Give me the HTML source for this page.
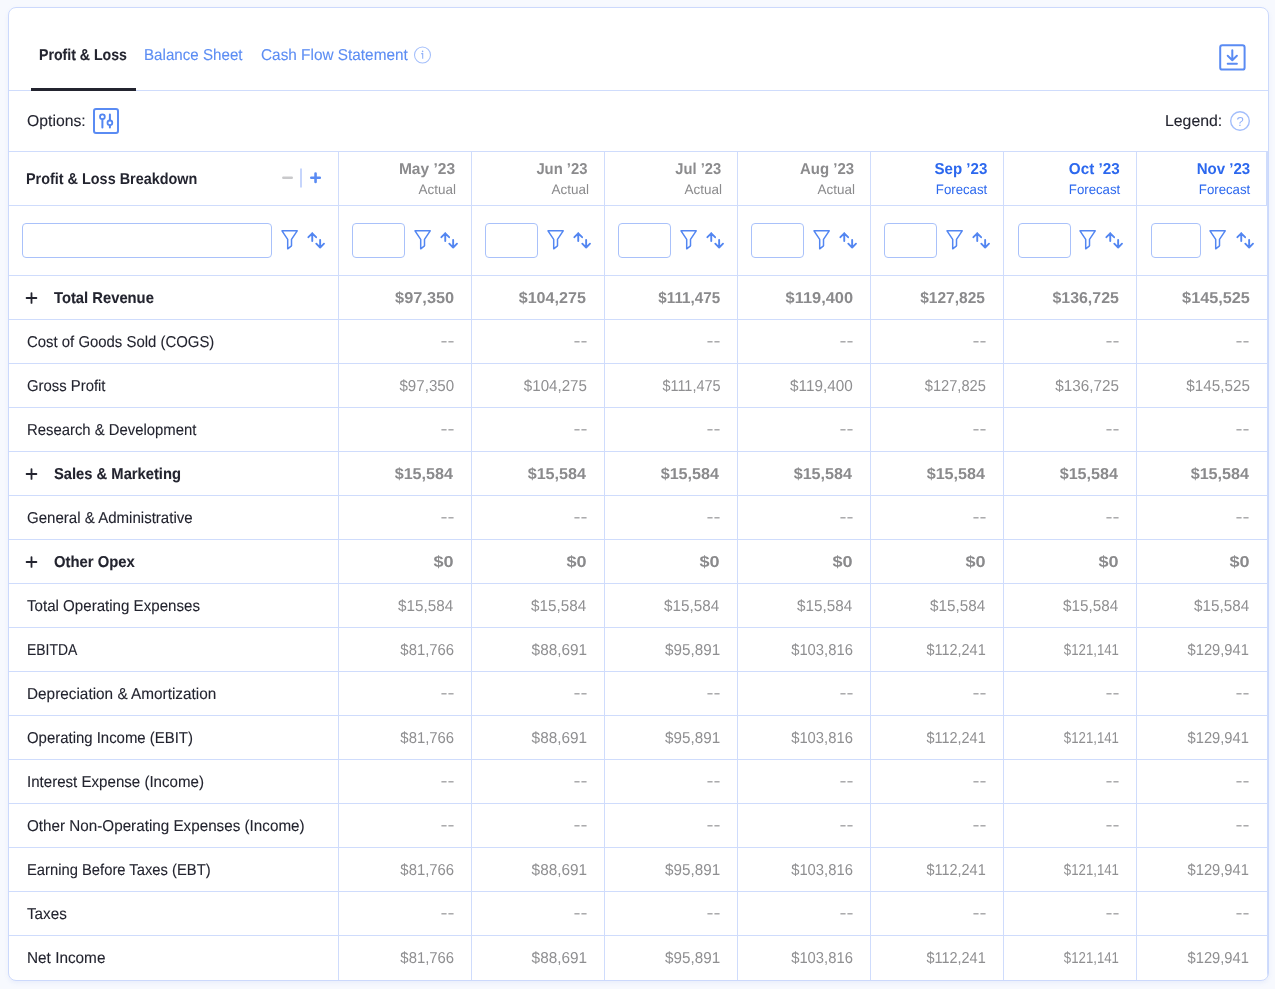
<!DOCTYPE html>
<html lang="en"><head><meta charset="utf-8"><title>Profit &amp; Loss</title><style>
*{box-sizing:border-box;margin:0;padding:0}
html,body{width:1275px;height:989px;overflow:hidden}
body{background:#f7f9fe;font-family:"Liberation Sans",sans-serif;font-size:15.8px;color:#23242f;position:relative;text-rendering:geometricPrecision}
.t{position:relative;display:inline-block;white-space:nowrap;transform-origin:0 50%}
.t.ra{transform-origin:100% 50%}
.card{position:absolute;left:8px;top:7px;width:1261px;height:974px;background:#fff;border:1px solid #ccd9fc;border-radius:8px;overflow:hidden;box-shadow:0 2px 4px rgba(120,150,230,.1);will-change:transform}
.tabs{position:absolute;left:0;top:0;width:1259px;height:83px;border-bottom:1px solid #cfdcfc}
.tab{position:absolute;top:39px;line-height:18px;white-space:nowrap;color:#5c8df3}
.tab.on{color:#23242f;font-weight:700}
.ul{position:absolute;left:22px;top:80px;width:105px;height:3px;background:#23242f}
.abs{position:absolute}
.opts{position:absolute;left:0;top:83px;width:1259px;height:60px}
.opts .o{position:absolute;top:21.8px;line-height:18px;white-space:nowrap}
.grid{position:absolute;left:0;top:143px;width:1259px;border-top:1px solid #cfdcfc;border-right:1px solid #cfdcfc}
.r{display:flex;border-bottom:1px solid #cfdcfc;height:44px}
.r:last-child{border-bottom:none}
.c{flex:0 0 133px;border-left:1px solid #cfdcfc;position:relative;white-space:nowrap}
.c0{flex:0 0 329px;border-left:none;position:relative;white-space:nowrap}
.c.last{flex:0 0 131px}
.hr{height:54px}
.hr .c0 b{position:absolute;left:18px;top:19.1px;line-height:18px}
.hr .c{text-align:right;padding-right:16px;color:#8b8b8d}
.hr .c b{display:block;margin-top:9px;line-height:18px;font-size:15.8px}
.hr .c i{display:block;font-style:normal;font-size:13.7px;line-height:16px;margin-top:2.9px}
.hr .c.f{color:#2c68ee}
.hr .c.last{border-right:1px solid #cfdcfc;padding-right:15px}
.fr{height:70px}
.in{position:absolute;top:17px;height:35px;border:1px solid #a9c1fa;border-radius:4px;background:#fff}
.fi{position:absolute;top:21.9px}
.si{position:absolute;top:25px}
.d .c0{padding-left:18px;line-height:43px;-webkit-text-stroke:.1px}
.tab,.opts .o{-webkit-text-stroke:.1px}
.d .c{text-align:right;padding-right:17px;line-height:43px;color:#8f8f91}
.d .c.dd{color:#9a9a9c}
.d .c.dd .t{top:.3px}
.d.b .c0{font-weight:700;padding-left:45px}
.d.b .c{font-weight:700;color:#8a8a8c}
.d .t{top:.9px}
.pl{position:absolute;left:15.7px;top:15px}
</style></head><body>
<div class="card">
<div class="tabs">
<span class="tab on" style="left:31px"><span class="t" style="transform:scaleX(0.895);left:-0.64px;">Profit &amp; Loss</span></span>
<span class="tab" style="left:136px"><span class="t" style="transform:scaleX(0.959);left:-0.65px;">Balance Sheet</span></span>
<span class="tab" style="left:252px"><span class="t" style="transform:scaleX(0.972);left:-0.22px;">Cash Flow Statement</span></span>
<svg class="abs" style="left:404px;top:37px" width="20" height="20" viewBox="0 0 20 20"><circle cx="9.5" cy="10" r="8" fill="none" stroke="#a6c0fb" stroke-width="1.1"/><path d="M8.2 8.6 H9.7 V13.8" fill="none" stroke="#8fb0f8" stroke-width="1.1"/><circle cx="9.6" cy="6.4" r=".8" fill="#8fb0f8"/></svg>
<svg class="abs" style="left:1209px;top:35px" width="30" height="30" viewBox="0 0 30 30"><rect x="2.2" y="2.2" width="24.4" height="24.4" rx="2.2" fill="none" stroke="#5a8bf3" stroke-width="2"/><path d="M14.3 7.3 V17 M9.7 12.8 L14.3 17.2 L18.9 12.8 M9.7 20.7 H18.9" fill="none" stroke="#5a8bf3" stroke-width="2" stroke-linecap="round" stroke-linejoin="round"/></svg>
<div class="ul"></div>
</div>
<div class="opts"><span class="o" style="left:18px"><span class="t" style="transform:scaleX(0.997);left:-0.36px;">Options:</span></span>
<svg class="abs" style="left:82px;top:15px" width="30" height="30" viewBox="0 0 30 30"><rect x="3" y="3" width="24" height="24" rx="2" fill="none" stroke="#5a8bf3" stroke-width="2"/><path d="M11.4 13.6 V21.6 M18.9 8.4 V14.4 M18.9 19.4 V21.6" fill="none" stroke="#5386f1" stroke-width="2" stroke-linecap="round"/><circle cx="11.4" cy="10.7" r="2.4" fill="none" stroke="#5386f1" stroke-width="1.8"/><circle cx="18.9" cy="16.8" r="2.4" fill="none" stroke="#5386f1" stroke-width="1.8"/></svg>
<span class="o" style="left:1157px"><span class="t" style="transform:scaleX(1.003);left:-0.70px;">Legend:</span></span>
<svg class="abs" style="left:1219px;top:17.5px" width="24" height="24" viewBox="0 0 24 24"><circle cx="12" cy="12" r="9.3" fill="none" stroke="#a3befb" stroke-width="1.4"/><text x="12" y="16.6" text-anchor="middle" font-family="Liberation Sans, sans-serif" font-size="13" fill="#93b2f9">?</text></svg>
</div>
<div class="grid">
<div class="r hr"><div class="c0"><b><span class="t" style="transform:scaleX(0.912);left:-0.97px;">Profit &amp; Loss Breakdown</span></b>
<svg class="abs" style="left:270px;top:13px" width="50" height="26" viewBox="0 0 50 26"><path d="M4.3 12.7 H12.8" stroke="#c9c9cb" stroke-width="2.4" fill="none" stroke-linecap="round"/><path d="M22 3.6 V22.5" stroke="#c6d5fc" stroke-width="2" fill="none"/><path d="M32.3 12.8 H40.8 M36.55 8.55 V17.05" stroke="#5a8bf3" stroke-width="2.6" fill="none" stroke-linecap="round"/></svg>
</div>
<div class="c"><b><span class="t ra" style="transform:scaleX(0.984);left:-0.33px;">May ’23</span></b><i><span class="t ra" style="transform:scaleX(0.984);left:0.67px;">Actual</span></i></div>
<div class="c"><b><span class="t ra" style="transform:scaleX(0.938);left:-0.18px;">Jun ’23</span></b><i><span class="t ra" style="transform:scaleX(0.984);left:0.67px;">Actual</span></i></div>
<div class="c"><b><span class="t ra" style="transform:scaleX(0.932);left:-0.19px;">Jul ’23</span></b><i><span class="t ra" style="transform:scaleX(0.984);left:0.67px;">Actual</span></i></div>
<div class="c"><b><span class="t ra" style="transform:scaleX(0.946);left:-0.11px;">Aug ’23</span></b><i><span class="t ra" style="transform:scaleX(0.984);left:0.67px;">Actual</span></i></div>
<div class="c f"><b><span class="t ra" style="transform:scaleX(0.954);left:-0.14px;">Sep ’23</span></b><i><span class="t ra" style="transform:scaleX(0.966);left:-0.16px;">Forecast</span></i></div>
<div class="c f"><b><span class="t ra" style="transform:scaleX(0.966);left:0.04px;">Oct ’23</span></b><i><span class="t ra" style="transform:scaleX(0.966);left:-0.16px;">Forecast</span></i></div>
<div class="c f last"><b><span class="t ra" style="transform:scaleX(0.952);left:-1.18px;">Nov ’23</span></b><i><span class="t ra" style="transform:scaleX(0.966);left:-0.48px;">Forecast</span></i></div>
</div>
<div class="r fr"><div class="c0"><div class="in" style="left:13px;width:250px"></div><svg class="fi" style="left:271px" width="20" height="22" viewBox="0 0 20 22"><path d="M2 2.8 H17.2 L11.5 11.4 V17.8 L7.7 20.8 V11.4 Z" fill="none" stroke="#5386f1" stroke-width="1.5" stroke-linejoin="round"/></svg><svg class="si" style="left:297.8px" width="20" height="20" viewBox="0 0 20 20"><path d="M5.25 10 V2.3 M1.4 6.2 L5.25 2.3 L9.1 6.2 M13.15 8.85 V16.55 M9.3 12.65 L13.15 16.55 L17 12.65" fill="none" stroke="#5386f1" stroke-width="1.9" stroke-linecap="round" stroke-linejoin="round"/></svg></div>
<div class="c"><div class="in" style="left:13px;width:53px"></div><svg class="fi" style="left:73.85px" width="20" height="22" viewBox="0 0 20 22"><path d="M2 2.8 H17.2 L11.5 11.4 V17.8 L7.7 20.8 V11.4 Z" fill="none" stroke="#5386f1" stroke-width="1.5" stroke-linejoin="round"/></svg><svg class="si" style="left:100.65px" width="20" height="20" viewBox="0 0 20 20"><path d="M5.25 10 V2.3 M1.4 6.2 L5.25 2.3 L9.1 6.2 M13.15 8.85 V16.55 M9.3 12.65 L13.15 16.55 L17 12.65" fill="none" stroke="#5386f1" stroke-width="1.9" stroke-linecap="round" stroke-linejoin="round"/></svg></div>
<div class="c"><div class="in" style="left:13px;width:53px"></div><svg class="fi" style="left:73.85px" width="20" height="22" viewBox="0 0 20 22"><path d="M2 2.8 H17.2 L11.5 11.4 V17.8 L7.7 20.8 V11.4 Z" fill="none" stroke="#5386f1" stroke-width="1.5" stroke-linejoin="round"/></svg><svg class="si" style="left:100.65px" width="20" height="20" viewBox="0 0 20 20"><path d="M5.25 10 V2.3 M1.4 6.2 L5.25 2.3 L9.1 6.2 M13.15 8.85 V16.55 M9.3 12.65 L13.15 16.55 L17 12.65" fill="none" stroke="#5386f1" stroke-width="1.9" stroke-linecap="round" stroke-linejoin="round"/></svg></div>
<div class="c"><div class="in" style="left:13px;width:53px"></div><svg class="fi" style="left:73.85px" width="20" height="22" viewBox="0 0 20 22"><path d="M2 2.8 H17.2 L11.5 11.4 V17.8 L7.7 20.8 V11.4 Z" fill="none" stroke="#5386f1" stroke-width="1.5" stroke-linejoin="round"/></svg><svg class="si" style="left:100.65px" width="20" height="20" viewBox="0 0 20 20"><path d="M5.25 10 V2.3 M1.4 6.2 L5.25 2.3 L9.1 6.2 M13.15 8.85 V16.55 M9.3 12.65 L13.15 16.55 L17 12.65" fill="none" stroke="#5386f1" stroke-width="1.9" stroke-linecap="round" stroke-linejoin="round"/></svg></div>
<div class="c"><div class="in" style="left:13px;width:53px"></div><svg class="fi" style="left:73.85px" width="20" height="22" viewBox="0 0 20 22"><path d="M2 2.8 H17.2 L11.5 11.4 V17.8 L7.7 20.8 V11.4 Z" fill="none" stroke="#5386f1" stroke-width="1.5" stroke-linejoin="round"/></svg><svg class="si" style="left:100.65px" width="20" height="20" viewBox="0 0 20 20"><path d="M5.25 10 V2.3 M1.4 6.2 L5.25 2.3 L9.1 6.2 M13.15 8.85 V16.55 M9.3 12.65 L13.15 16.55 L17 12.65" fill="none" stroke="#5386f1" stroke-width="1.9" stroke-linecap="round" stroke-linejoin="round"/></svg></div>
<div class="c"><div class="in" style="left:13px;width:53px"></div><svg class="fi" style="left:73.85px" width="20" height="22" viewBox="0 0 20 22"><path d="M2 2.8 H17.2 L11.5 11.4 V17.8 L7.7 20.8 V11.4 Z" fill="none" stroke="#5386f1" stroke-width="1.5" stroke-linejoin="round"/></svg><svg class="si" style="left:100.65px" width="20" height="20" viewBox="0 0 20 20"><path d="M5.25 10 V2.3 M1.4 6.2 L5.25 2.3 L9.1 6.2 M13.15 8.85 V16.55 M9.3 12.65 L13.15 16.55 L17 12.65" fill="none" stroke="#5386f1" stroke-width="1.9" stroke-linecap="round" stroke-linejoin="round"/></svg></div>
<div class="c"><div class="in" style="left:14px;width:53px"></div><svg class="fi" style="left:73.85px" width="20" height="22" viewBox="0 0 20 22"><path d="M2 2.8 H17.2 L11.5 11.4 V17.8 L7.7 20.8 V11.4 Z" fill="none" stroke="#5386f1" stroke-width="1.5" stroke-linejoin="round"/></svg><svg class="si" style="left:100.65px" width="20" height="20" viewBox="0 0 20 20"><path d="M5.25 10 V2.3 M1.4 6.2 L5.25 2.3 L9.1 6.2 M13.15 8.85 V16.55 M9.3 12.65 L13.15 16.55 L17 12.65" fill="none" stroke="#5386f1" stroke-width="1.9" stroke-linecap="round" stroke-linejoin="round"/></svg></div>
<div class="c last"><div class="in" style="left:14px;width:50px"></div><svg class="fi" style="left:70.85px" width="20" height="22" viewBox="0 0 20 22"><path d="M2 2.8 H17.2 L11.5 11.4 V17.8 L7.7 20.8 V11.4 Z" fill="none" stroke="#5386f1" stroke-width="1.5" stroke-linejoin="round"/></svg><svg class="si" style="left:98.75px" width="20" height="20" viewBox="0 0 20 20"><path d="M5.25 10 V2.3 M1.4 6.2 L5.25 2.3 L9.1 6.2 M13.15 8.85 V16.55 M9.3 12.65 L13.15 16.55 L17 12.65" fill="none" stroke="#5386f1" stroke-width="1.9" stroke-linecap="round" stroke-linejoin="round"/></svg></div>
</div>
<div class="r d b"><div class="c0"><svg class="pl" width="14" height="14" viewBox="0 0 14 14"><path d="M1.6 7 H11.4 M6.5 2.1 V11.9" stroke="#23242f" stroke-width="1.8" fill="none" stroke-linecap="round"/></svg><span class="t" style="transform:scaleX(0.935);">Total Revenue</span></div>
<div class="c"><span class="t ra" style="transform:scaleX(1.033);left:-0.12px;">$97,350</span></div>
<div class="c"><span class="t ra" style="transform:scaleX(1.020);left:-0.66px;">$104,275</span></div>
<div class="c"><span class="t ra" style="transform:scaleX(0.964);left:-0.33px;">$111,475</span></div>
<div class="c"><span class="t ra" style="transform:scaleX(1.037);left:-0.05px;">$119,400</span></div>
<div class="c"><span class="t ra" style="transform:scaleX(0.982);left:-0.65px;">$127,825</span></div>
<div class="c"><span class="t ra" style="transform:scaleX(1.009);left:-0.26px;">$136,725</span></div>
<div class="c last"><span class="t ra" style="transform:scaleX(1.029);left:-0.61px;">$145,525</span></div>
</div>
<div class="r d"><div class="c0"><span class="t" style="transform:scaleX(0.944);">Cost of Goods Sold (COGS)</span></div>
<div class="c dd"><span class="t ra" style="transform:scaleX(1.326);left:0.05px;">--</span></div>
<div class="c dd"><span class="t ra" style="transform:scaleX(1.326);left:0.05px;">--</span></div>
<div class="c dd"><span class="t ra" style="transform:scaleX(1.326);left:0.05px;">--</span></div>
<div class="c dd"><span class="t ra" style="transform:scaleX(1.326);left:0.05px;">--</span></div>
<div class="c dd"><span class="t ra" style="transform:scaleX(1.326);left:0.05px;">--</span></div>
<div class="c dd"><span class="t ra" style="transform:scaleX(1.326);left:0.05px;">--</span></div>
<div class="c last dd"><span class="t ra" style="transform:scaleX(1.326);left:-0.87px;">--</span></div>
</div>
<div class="r d"><div class="c0"><span class="t" style="transform:scaleX(0.941);">Gross Profit</span></div>
<div class="c"><span class="t ra" style="transform:scaleX(0.957);left:-0.33px;">$97,350</span></div>
<div class="c"><span class="t ra" style="transform:scaleX(0.957);left:-0.13px;">$104,275</span></div>
<div class="c"><span class="t ra" style="transform:scaleX(0.915);left:0.12px;">$111,475</span></div>
<div class="c"><span class="t ra" style="transform:scaleX(0.969);left:-0.13px;">$119,400</span></div>
<div class="c"><span class="t ra" style="transform:scaleX(0.928);left:-0.29px;">$127,825</span></div>
<div class="c"><span class="t ra" style="transform:scaleX(0.964);left:-0.26px;">$136,725</span></div>
<div class="c last"><span class="t ra" style="transform:scaleX(0.964);left:-0.58px;">$145,525</span></div>
</div>
<div class="r d"><div class="c0"><span class="t" style="transform:scaleX(0.941);">Research &amp; Development</span></div>
<div class="c dd"><span class="t ra" style="transform:scaleX(1.326);left:0.05px;">--</span></div>
<div class="c dd"><span class="t ra" style="transform:scaleX(1.326);left:0.05px;">--</span></div>
<div class="c dd"><span class="t ra" style="transform:scaleX(1.326);left:0.05px;">--</span></div>
<div class="c dd"><span class="t ra" style="transform:scaleX(1.326);left:0.05px;">--</span></div>
<div class="c dd"><span class="t ra" style="transform:scaleX(1.326);left:0.05px;">--</span></div>
<div class="c dd"><span class="t ra" style="transform:scaleX(1.326);left:0.05px;">--</span></div>
<div class="c last dd"><span class="t ra" style="transform:scaleX(1.326);left:-0.87px;">--</span></div>
</div>
<div class="r d b"><div class="c0"><svg class="pl" width="14" height="14" viewBox="0 0 14 14"><path d="M1.6 7 H11.4 M6.5 2.1 V11.9" stroke="#23242f" stroke-width="1.8" fill="none" stroke-linecap="round"/></svg><span class="t" style="transform:scaleX(0.933);">Sales &amp; Marketing</span></div>
<div class="c"><span class="t ra" style="transform:scaleX(1.024);left:-0.63px;">$15,584</span></div>
<div class="c"><span class="t ra" style="transform:scaleX(1.024);left:-0.63px;">$15,584</span></div>
<div class="c"><span class="t ra" style="transform:scaleX(1.024);left:-0.63px;">$15,584</span></div>
<div class="c"><span class="t ra" style="transform:scaleX(1.024);left:-0.63px;">$15,584</span></div>
<div class="c"><span class="t ra" style="transform:scaleX(1.024);left:-0.63px;">$15,584</span></div>
<div class="c"><span class="t ra" style="transform:scaleX(1.024);left:-0.63px;">$15,584</span></div>
<div class="c last"><span class="t ra" style="transform:scaleX(1.024);left:-0.95px;">$15,584</span></div>
</div>
<div class="r d"><div class="c0"><span class="t" style="transform:scaleX(0.953);">General &amp; Administrative</span></div>
<div class="c dd"><span class="t ra" style="transform:scaleX(1.326);left:0.05px;">--</span></div>
<div class="c dd"><span class="t ra" style="transform:scaleX(1.326);left:0.05px;">--</span></div>
<div class="c dd"><span class="t ra" style="transform:scaleX(1.326);left:0.05px;">--</span></div>
<div class="c dd"><span class="t ra" style="transform:scaleX(1.326);left:0.05px;">--</span></div>
<div class="c dd"><span class="t ra" style="transform:scaleX(1.326);left:0.05px;">--</span></div>
<div class="c dd"><span class="t ra" style="transform:scaleX(1.326);left:0.05px;">--</span></div>
<div class="c last dd"><span class="t ra" style="transform:scaleX(1.326);left:-0.87px;">--</span></div>
</div>
<div class="r d b"><div class="c0"><svg class="pl" width="14" height="14" viewBox="0 0 14 14"><path d="M1.6 7 H11.4 M6.5 2.1 V11.9" stroke="#23242f" stroke-width="1.8" fill="none" stroke-linecap="round"/></svg><span class="t" style="transform:scaleX(0.938);">Other Opex</span></div>
<div class="c"><span class="t ra" style="transform:scaleX(1.145);left:0.06px;">$0</span></div>
<div class="c"><span class="t ra" style="transform:scaleX(1.145);left:0.06px;">$0</span></div>
<div class="c"><span class="t ra" style="transform:scaleX(1.145);left:0.06px;">$0</span></div>
<div class="c"><span class="t ra" style="transform:scaleX(1.145);left:0.06px;">$0</span></div>
<div class="c"><span class="t ra" style="transform:scaleX(1.145);left:0.06px;">$0</span></div>
<div class="c"><span class="t ra" style="transform:scaleX(1.145);left:0.06px;">$0</span></div>
<div class="c last"><span class="t ra" style="transform:scaleX(1.145);left:-0.86px;">$0</span></div>
</div>
<div class="r d"><div class="c0"><span class="t" style="transform:scaleX(0.956);">Total Operating Expenses</span></div>
<div class="c"><span class="t ra" style="transform:scaleX(0.964);left:-0.49px;">$15,584</span></div>
<div class="c"><span class="t ra" style="transform:scaleX(0.964);left:-0.49px;">$15,584</span></div>
<div class="c"><span class="t ra" style="transform:scaleX(0.964);left:-0.49px;">$15,584</span></div>
<div class="c"><span class="t ra" style="transform:scaleX(0.964);left:-0.49px;">$15,584</span></div>
<div class="c"><span class="t ra" style="transform:scaleX(0.964);left:-0.49px;">$15,584</span></div>
<div class="c"><span class="t ra" style="transform:scaleX(0.964);left:-0.49px;">$15,584</span></div>
<div class="c last"><span class="t ra" style="transform:scaleX(0.964);left:-0.81px;">$15,584</span></div>
</div>
<div class="r d"><div class="c0"><span class="t" style="transform:scaleX(0.882);">EBITDA</span></div>
<div class="c"><span class="t ra" style="transform:scaleX(0.941);left:-0.34px;">$81,766</span></div>
<div class="c"><span class="t ra" style="transform:scaleX(0.972);left:-0.39px;">$88,691</span></div>
<div class="c"><span class="t ra" style="transform:scaleX(0.963);left:-0.25px;">$95,891</span></div>
<div class="c"><span class="t ra" style="transform:scaleX(0.937);left:-0.24px;">$103,816</span></div>
<div class="c"><span class="t ra" style="transform:scaleX(0.916);left:-0.23px;">$112,241</span></div>
<div class="c"><span class="t ra" style="transform:scaleX(0.835);left:-0.35px;">$121,141</span></div>
<div class="c last"><span class="t ra" style="transform:scaleX(0.931);left:-0.88px;">$129,941</span></div>
</div>
<div class="r d"><div class="c0"><span class="t" style="transform:scaleX(0.971);">Depreciation &amp; Amortization</span></div>
<div class="c dd"><span class="t ra" style="transform:scaleX(1.326);left:0.05px;">--</span></div>
<div class="c dd"><span class="t ra" style="transform:scaleX(1.326);left:0.05px;">--</span></div>
<div class="c dd"><span class="t ra" style="transform:scaleX(1.326);left:0.05px;">--</span></div>
<div class="c dd"><span class="t ra" style="transform:scaleX(1.326);left:0.05px;">--</span></div>
<div class="c dd"><span class="t ra" style="transform:scaleX(1.326);left:0.05px;">--</span></div>
<div class="c dd"><span class="t ra" style="transform:scaleX(1.326);left:0.05px;">--</span></div>
<div class="c last dd"><span class="t ra" style="transform:scaleX(1.326);left:-0.87px;">--</span></div>
</div>
<div class="r d"><div class="c0"><span class="t" style="transform:scaleX(0.945);">Operating Income (EBIT)</span></div>
<div class="c"><span class="t ra" style="transform:scaleX(0.941);left:-0.34px;">$81,766</span></div>
<div class="c"><span class="t ra" style="transform:scaleX(0.972);left:-0.39px;">$88,691</span></div>
<div class="c"><span class="t ra" style="transform:scaleX(0.963);left:-0.25px;">$95,891</span></div>
<div class="c"><span class="t ra" style="transform:scaleX(0.937);left:-0.24px;">$103,816</span></div>
<div class="c"><span class="t ra" style="transform:scaleX(0.916);left:-0.23px;">$112,241</span></div>
<div class="c"><span class="t ra" style="transform:scaleX(0.835);left:-0.35px;">$121,141</span></div>
<div class="c last"><span class="t ra" style="transform:scaleX(0.931);left:-0.88px;">$129,941</span></div>
</div>
<div class="r d"><div class="c0"><span class="t" style="transform:scaleX(0.955);">Interest Expense (Income)</span></div>
<div class="c dd"><span class="t ra" style="transform:scaleX(1.326);left:0.05px;">--</span></div>
<div class="c dd"><span class="t ra" style="transform:scaleX(1.326);left:0.05px;">--</span></div>
<div class="c dd"><span class="t ra" style="transform:scaleX(1.326);left:0.05px;">--</span></div>
<div class="c dd"><span class="t ra" style="transform:scaleX(1.326);left:0.05px;">--</span></div>
<div class="c dd"><span class="t ra" style="transform:scaleX(1.326);left:0.05px;">--</span></div>
<div class="c dd"><span class="t ra" style="transform:scaleX(1.326);left:0.05px;">--</span></div>
<div class="c last dd"><span class="t ra" style="transform:scaleX(1.326);left:-0.87px;">--</span></div>
</div>
<div class="r d"><div class="c0"><span class="t" style="transform:scaleX(0.964);">Other Non-Operating Expenses (Income)</span></div>
<div class="c dd"><span class="t ra" style="transform:scaleX(1.326);left:0.05px;">--</span></div>
<div class="c dd"><span class="t ra" style="transform:scaleX(1.326);left:0.05px;">--</span></div>
<div class="c dd"><span class="t ra" style="transform:scaleX(1.326);left:0.05px;">--</span></div>
<div class="c dd"><span class="t ra" style="transform:scaleX(1.326);left:0.05px;">--</span></div>
<div class="c dd"><span class="t ra" style="transform:scaleX(1.326);left:0.05px;">--</span></div>
<div class="c dd"><span class="t ra" style="transform:scaleX(1.326);left:0.05px;">--</span></div>
<div class="c last dd"><span class="t ra" style="transform:scaleX(1.326);left:-0.87px;">--</span></div>
</div>
<div class="r d"><div class="c0"><span class="t" style="transform:scaleX(0.935);">Earning Before Taxes (EBT)</span></div>
<div class="c"><span class="t ra" style="transform:scaleX(0.941);left:-0.34px;">$81,766</span></div>
<div class="c"><span class="t ra" style="transform:scaleX(0.972);left:-0.39px;">$88,691</span></div>
<div class="c"><span class="t ra" style="transform:scaleX(0.963);left:-0.25px;">$95,891</span></div>
<div class="c"><span class="t ra" style="transform:scaleX(0.937);left:-0.24px;">$103,816</span></div>
<div class="c"><span class="t ra" style="transform:scaleX(0.916);left:-0.23px;">$112,241</span></div>
<div class="c"><span class="t ra" style="transform:scaleX(0.835);left:-0.35px;">$121,141</span></div>
<div class="c last"><span class="t ra" style="transform:scaleX(0.931);left:-0.88px;">$129,941</span></div>
</div>
<div class="r d"><div class="c0"><span class="t" style="transform:scaleX(0.964);">Taxes</span></div>
<div class="c dd"><span class="t ra" style="transform:scaleX(1.326);left:0.05px;">--</span></div>
<div class="c dd"><span class="t ra" style="transform:scaleX(1.326);left:0.05px;">--</span></div>
<div class="c dd"><span class="t ra" style="transform:scaleX(1.326);left:0.05px;">--</span></div>
<div class="c dd"><span class="t ra" style="transform:scaleX(1.326);left:0.05px;">--</span></div>
<div class="c dd"><span class="t ra" style="transform:scaleX(1.326);left:0.05px;">--</span></div>
<div class="c dd"><span class="t ra" style="transform:scaleX(1.326);left:0.05px;">--</span></div>
<div class="c last dd"><span class="t ra" style="transform:scaleX(1.326);left:-0.87px;">--</span></div>
</div>
<div class="r d"><div class="c0"><span class="t" style="transform:scaleX(0.971);">Net Income</span></div>
<div class="c"><span class="t ra" style="transform:scaleX(0.941);left:-0.34px;">$81,766</span></div>
<div class="c"><span class="t ra" style="transform:scaleX(0.972);left:-0.39px;">$88,691</span></div>
<div class="c"><span class="t ra" style="transform:scaleX(0.963);left:-0.25px;">$95,891</span></div>
<div class="c"><span class="t ra" style="transform:scaleX(0.937);left:-0.24px;">$103,816</span></div>
<div class="c"><span class="t ra" style="transform:scaleX(0.916);left:-0.23px;">$112,241</span></div>
<div class="c"><span class="t ra" style="transform:scaleX(0.835);left:-0.35px;">$121,141</span></div>
<div class="c last"><span class="t ra" style="transform:scaleX(0.931);left:-0.88px;">$129,941</span></div>
</div>
</div></div></body></html>
